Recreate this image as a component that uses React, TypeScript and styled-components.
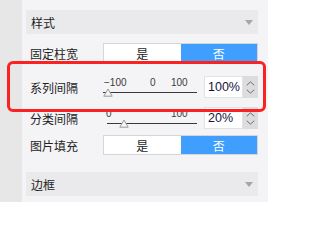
import React from 'react';
import styled, { createGlobalStyle } from 'styled-components';

const GlobalStyle = createGlobalStyle`
  html, body {
    margin: 0;
    padding: 0;
    width: 268px;
    height: 202px;
    overflow: hidden;
  }
  body {
    font-family: "Noto Sans CJK SC", "Noto Sans", sans-serif;
  }
`;

const Page = styled.div`
  position: relative;
  display: flex;
  width: 268px;
  height: 202px;
`;

const Strip = styled.div`
  width: 22px;
  background-color: #e7e7e7;
`;

const Panel = styled.div`
  flex: 1;
  display: flex;
  flex-direction: column;
  background-color: #f4f4f6;
  padding: 10px 10px 0 4px;
`;

const SectionHeader = styled.div<{ $mt: number }>`
  display: flex;
  align-items: center;
  justify-content: space-between;
  height: 24px;
  margin-top: ${p => p.$mt}px;
  padding: 0 5px;
  background-color: #eaeaec;
  font-size: 12px;
  color: #1e1e1e;
  flex-shrink: 0;
`;

const Caret = styled.span`
  width: 0;
  height: 0;
  border-left: 4.5px solid transparent;
  border-right: 4.5px solid transparent;
  border-top: 5px solid #a6a6a6;
`;

const Row = styled.div<{ $h: number; $mt: number }>`
  display: flex;
  align-items: center;
  height: ${p => p.$h}px;
  margin-top: ${p => p.$mt}px;
  padding-left: 4px;
  flex-shrink: 0;
`;

const Label = styled.div`
  width: 73px;
  font-size: 12px;
  color: #1e1e1e;
`;

const Toggle = styled.div`
  display: flex;
  width: 155px;
  height: 20px;
  box-sizing: border-box;
  border: 1px solid #d6d6d8;
  background-color: #fff;
`;

const ToggleOption = styled.div<{ $active?: boolean }>`
  flex: 1;
  display: flex;
  align-items: center;
  justify-content: center;
  font-size: 12px;
  background-color: ${p => (p.$active ? '#409eff' : '#fff')};
  color: ${p => (p.$active ? '#fff' : '#1e1e1e')};
`;

const Slider = styled.div`
  position: relative;
  width: 94px;
  height: 22px;
  margin-right: 7px;
`;

const Track = styled.div<{ $start: number }>`
  position: absolute;
  left: ${p => p.$start}px;
  right: 0;
  top: 16px;
  height: 1px;
  background-color: #3a3a3a;
`;

const Mark = styled.span`
  position: absolute;
  top: 2px;
  font-family: "Liberation Sans", Arial, sans-serif;
  font-size: 10px;
  line-height: 10px;
  color: #3a3a3a;
`;

const Thumb = styled.svg`
  position: absolute;
  top: 12px;
`;

const NumberBox = styled.div`
  display: flex;
  align-items: center;
  width: 39px;
  height: 22px;
  box-sizing: border-box;
  padding-left: 3px;
  border: 1px solid #e2e2e4;
  background-color: #fff;
  font-family: "Liberation Sans", Arial, sans-serif;
  font-size: 12.5px;
  color: #14143a;
`;

const Spinner = styled.div`
  display: flex;
  flex-direction: column;
  align-items: center;
  justify-content: center;
  gap: 3px;
  width: 15px;
  height: 22px;
  background-color: #dcdcde;
`;

const Highlight = styled.div`
  position: absolute;
  left: 7px;
  top: 61px;
  width: 259px;
  height: 51px;
  box-sizing: border-box;
  border: 3px solid #fb2222;
  border-radius: 6px;
  pointer-events: none;
`;

type MarkDef = { text: string; left: number };

const SliderRow = ({
  label,
  marks,
  start,
  thumb,
  value,
  mt,
}: {
  label: string;
  marks: MarkDef[];
  start: number;
  thumb: number;
  value: string;
  mt: number;
}) => (
  <Row $h={22} $mt={mt}>
    <Label>{label}</Label>
    <Slider>
      {marks.map(m => (
        <Mark key={m.text} style={{ left: m.left }}>
          {m.text}
        </Mark>
      ))}
      <Track $start={start} />
      <Thumb width="10" height="9" viewBox="0 0 10 9" style={{ left: thumb }}>
        <path d="M5 1 L9.2 8.2 L0.8 8.2 Z" fill="#f4f4f6" stroke="#9a9a9a" strokeWidth="1" />
      </Thumb>
    </Slider>
    <NumberBox>{value}</NumberBox>
    <Spinner>
      <svg width="9" height="5" viewBox="0 0 9 5">
        <path d="M0.8 4.3 L4.5 0.8 L8.2 4.3" fill="none" stroke="#6a6a6a" strokeWidth="1" />
      </svg>
      <svg width="9" height="5" viewBox="0 0 9 5">
        <path d="M0.8 0.7 L4.5 4.2 L8.2 0.7" fill="none" stroke="#6a6a6a" strokeWidth="1" />
      </svg>
    </Spinner>
  </Row>
);

const ToggleRow = ({ label, mt }: { label: string; mt: number }) => (
  <Row $h={20} $mt={mt}>
    <Label>{label}</Label>
    <Toggle>
      <ToggleOption>是</ToggleOption>
      <ToggleOption $active>否</ToggleOption>
    </Toggle>
  </Row>
);

const App: React.FC = () => (
  <>
    <GlobalStyle />
    <Page>
      <Strip />
      <Panel>
        <SectionHeader $mt={0}>
          <span>样式</span>
          <Caret />
        </SectionHeader>
        <ToggleRow label="固定柱宽" mt={9} />
        <SliderRow
          label="系列间隔"
          mt={13}
          start={0}
          thumb={0}
          value="100%"
          marks={[
            { text: '−100', left: 1 },
            { text: '0', left: 47 },
            { text: '100', left: 68 },
          ]}
        />
        <SliderRow
          label="分类间隔"
          mt={9}
          start={4}
          thumb={16}
          value="20%"
          marks={[
            { text: '0', left: 3 },
            { text: '100', left: 68 },
          ]}
        />
        <ToggleRow label="图片填充" mt={6} />
        <SectionHeader $mt={17}>
          <span>边框</span>
          <Caret />
        </SectionHeader>
      </Panel>
      <Highlight />
    </Page>
  </>
);

export default App;
